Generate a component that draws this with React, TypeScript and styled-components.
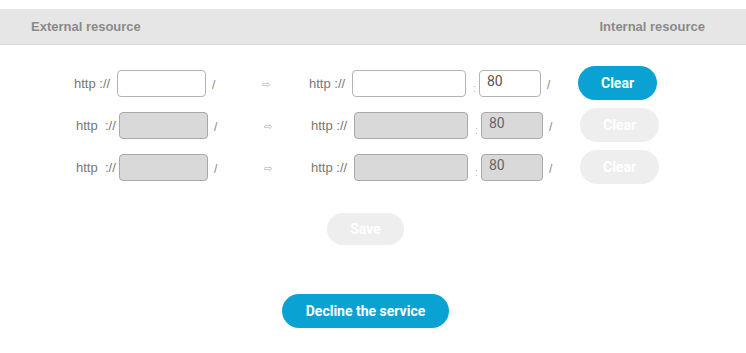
import React from "react";
import styled, { createGlobalStyle } from "styled-components";

const GlobalStyle = createGlobalStyle`
  html, body {
    margin: 0;
    padding: 0;
    background: #ffffff;
  }
  body {
    font-family: "Liberation Sans", Arial, sans-serif;
  }
`;

const Page = styled.div`
  width: 746px;
  padding-top: 9px;
`;

const Header = styled.div`
  height: 35px;
  background-color: #e6e6e6;
  border-bottom: 1px solid #dcdcdc;
  display: flex;
  align-items: center;
  justify-content: space-between;
  padding: 0 41px 0 31px;
`;

const HeaderTitle = styled.span`
  font-family: "Liberation Sans", Arial, sans-serif;
  font-weight: bold;
  font-size: 13px;
  color: #8a8a8a;
`;

const Content = styled.div`
  width: 731px;
  display: flex;
  flex-direction: column;
  align-items: center;
  padding-top: 21px;
`;

const Rows = styled.div`
  display: flex;
  flex-direction: column;
  gap: 8px;
  padding-left: 2px;
`;

const Row = styled.div<{ $shift: number }>`
  display: grid;
  grid-template-columns: 43px 95px 50px 47px 43px 121px 6px 68px 31px 79px;
  height: 34px;
  align-items: center;
  padding-left: ${(p) => p.$shift}px;
  padding-right: ${(p) => 2 - p.$shift}px;
`;

const Label = styled.span`
  font-family: "Liberation Sans", Arial, sans-serif;
  font-size: 13px;
  color: #777777;
  white-space: pre;
`;

const Field = styled.input<{ $w: number }>`
  box-sizing: border-box;
  width: ${(p) => p.$w}px;
  height: 27px;
  border: 1px solid ${(p) => (p.disabled ? "#a9a9a9" : "#b4b4b4")};
  border-radius: 4px;
  background-color: ${(p) => (p.disabled ? "#d9d9d9" : "#ffffff")};
  padding: 0 7px 5px 7px;
  font-family: Roboto, "Liberation Sans", sans-serif;
  font-size: 14px;
  color: #555555;
  outline: none;
  &:disabled {
    color: #666666;
  }
`;

const Slash = styled.span`
  font-family: "Liberation Sans", Arial, sans-serif;
  font-size: 12px;
  color: #888888;
  padding-top: 3px;
`;

const Arrow = styled.span`
  font-family: "DejaVu Sans", sans-serif;
  font-size: 10px;
  color: #aaaaaa;
  padding-top: 3px;
`;

const Colon = styled.span`
  font-family: "Liberation Sans", Arial, sans-serif;
  font-size: 11px;
  color: #bbbbbb;
  padding-top: 9px;
`;

const Pill = styled.button<{ $active: boolean; $w: number; $h: number }>`
  width: ${(p) => p.$w}px;
  height: ${(p) => p.$h}px;
  border: none;
  border-radius: ${(p) => p.$h / 2}px;
  background-color: ${(p) => (p.$active ? "#0aa2d2" : "#eeeeee")};
  color: #ffffff;
  font-family: Roboto, "Liberation Sans", sans-serif;
  font-weight: bold;
  font-size: 14px;
  padding: 0;
  cursor: ${(p) => (p.$active ? "pointer" : "default")};
`;

const SaveWrap = styled.div`
  margin-top: 29px;
`;

const DeclineWrap = styled.div`
  margin-top: 49px;
`;

const rows = [
  { label: "http ://", active: true, shift: 0 },
  { label: "http  ://", active: false, shift: 2 },
  { label: "http  ://", active: false, shift: 2 },
];

const App: React.FC = () => {
  return (
    <>
      <GlobalStyle />
      <Page>
        <Header>
          <HeaderTitle>External resource</HeaderTitle>
          <HeaderTitle>Internal resource</HeaderTitle>
        </Header>
        <Content>
          <Rows>
            {rows.map((r, i) => (
              <Row key={i} $shift={r.shift}>
                <Label>{r.label}</Label>
                <Field $w={89} disabled={!r.active} defaultValue="" />
                <Slash>/</Slash>
                <Arrow>⇨</Arrow>
                <Label>{r.label.replace("  ", " ")}</Label>
                <Field $w={114} disabled={!r.active} defaultValue="" />
                <Colon>:</Colon>
                <Field $w={62} disabled={!r.active} defaultValue="80" />
                <Slash>/</Slash>
                <Pill $active={r.active} $w={79} $h={34}>
                  Clear
                </Pill>
              </Row>
            ))}
          </Rows>
          <SaveWrap>
            <Pill $active={false} $w={77} $h={32}>
              Save
            </Pill>
          </SaveWrap>
          <DeclineWrap>
            <Pill $active={true} $w={167} $h={34}>
              Decline the service
            </Pill>
          </DeclineWrap>
        </Content>
      </Page>
    </>
  );
};

export default App;
